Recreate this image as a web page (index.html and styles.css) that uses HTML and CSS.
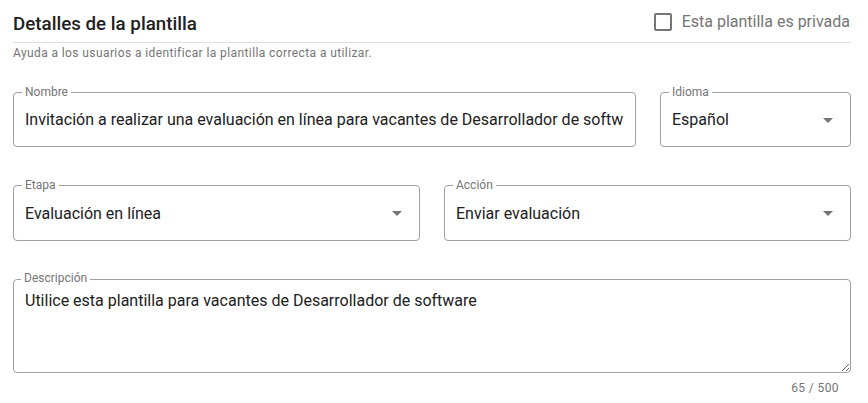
FILE: index.html
```html
<!DOCTYPE html>
<html lang="es">
<head>
<meta charset="utf-8">
<title>Detalles de la plantilla</title>
<link rel="stylesheet" href="styles.css">
</head>
<body>
<div class="page">
  <div class="header">
    <h2 class="title">Detalles de la plantilla</h2>
    <label class="check">
      <span class="box"></span>
      <span class="check-text">Esta plantilla es privada</span>
    </label>
  </div>
  <p class="subtitle">Ayuda a los usuarios a identificar la plantilla correcta a utilizar.</p>

  <div class="row row-first">
    <div class="field field-name">
      <span class="label">Nombre</span>
      <div class="value">Invitación a realizar una evaluación en línea para vacantes de Desarrollador de software</div>
    </div>
    <div class="field field-lang">
      <span class="label">Idioma</span>
      <div class="value">Español</div>
      <svg class="arrow" viewBox="0 0 24 24" width="24" height="24"><path d="M7 10l5 5 5-5z"/></svg>
    </div>
  </div>

  <div class="row">
    <div class="field field-half">
      <span class="label">Etapa</span>
      <div class="value">Evaluación en línea</div>
      <svg class="arrow" viewBox="0 0 24 24" width="24" height="24"><path d="M7 10l5 5 5-5z"/></svg>
    </div>
    <div class="field field-half">
      <span class="label">Acción</span>
      <div class="value">Enviar evaluación</div>
      <svg class="arrow" viewBox="0 0 24 24" width="24" height="24"><path d="M7 10l5 5 5-5z"/></svg>
    </div>
  </div>

  <div class="row">
    <div class="area-wrap">
      <span class="label">Descripción</span>
      <textarea class="area">Utilice esta plantilla para vacantes de Desarrollador de software</textarea>
    </div>
  </div>
  <div class="counter">65 / 500</div>
</div>
</body>
</html>
```

FILE: styles.css
```css
html, body {
  margin: 0;
  padding: 0;
  background: #ffffff;
}

body {
  font-family: Roboto, "Liberation Sans", sans-serif;
  color: #212121;
}

.page {
  width: 838px;
  padding: 8px 0 0 13px;
}

.header {
  display: flex;
  align-items: center;
  justify-content: space-between;
  height: 28px;
  padding-bottom: 6px;
  border-bottom: 1px solid #e0e0e0;
}

.title {
  align-self: flex-start;
  margin: 4px 0 0;
  font-size: 18.75px;
  font-weight: 500;
  line-height: 24px;
  color: #212121;
}

.check {
  display: flex;
  align-items: center;
  gap: 10px;
  margin-right: 1px;
  margin-top: -1px;
}

.box {
  width: 14px;
  height: 14px;
  border: 2px solid #757575;
  border-radius: 2px;
}

.check-text {
  font-size: 16px;
  line-height: 20px;
  color: #757575;
}

.subtitle {
  margin: 3px 0 0;
  font-size: 12px;
  line-height: 14px;
  letter-spacing: 0.4px;
  color: #757575;
}

.row {
  display: flex;
  gap: 24px;
  margin-top: 38px;
}

.row-first {
  margin-top: 32px;
}

.field {
  position: relative;
  box-sizing: border-box;
  height: 55px;
  border: 1px solid #a0a0a0;
  border-radius: 4px;
  padding: 0 11px;
  display: flex;
  align-items: center;
}

.field-name {
  width: 623px;
}

.field-lang {
  width: 191px;
}

.field-half {
  width: 407px;
  height: 56px;
}

.label {
  position: absolute;
  left: 8px;
  top: -8px;
  padding: 0 3px;
  background: #ffffff;
  font-size: 12px;
  line-height: 14px;
  color: #757575;
}

.value {
  flex: 1;
  min-width: 0;
  overflow: hidden;
  white-space: nowrap;
  font-size: 16px;
  line-height: 19px;
  color: #212121;
}

.arrow {
  flex: none;
  fill: #757575;
  margin-right: -1px;
}

.area-wrap {
  position: relative;
  width: 838px;
}

.area {
  display: block;
  box-sizing: border-box;
  width: 838px;
  height: 94px;
  margin: 0;
  border: 1px solid #a0a0a0;
  border-radius: 4px;
  padding: 11px 11px 9px;
  font-family: Roboto, "Liberation Sans", sans-serif;
  font-size: 16px;
  line-height: 19px;
  color: #212121;
  resize: vertical;
  outline: none;
}

.counter {
  margin-top: 8px;
  padding-right: 12px;
  text-align: right;
  font-size: 12px;
  line-height: 14px;
  letter-spacing: 0.4px;
  color: #757575;
}
```
